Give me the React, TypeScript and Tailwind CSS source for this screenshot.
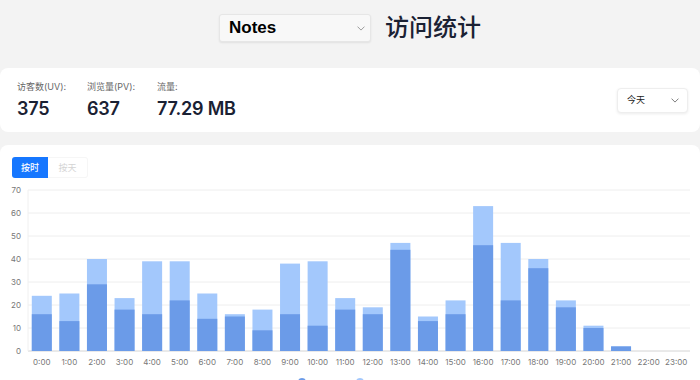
import React from "react";

const UV = [16, 13, 29, 18, 16, 22, 14, 15, 9, 16, 11, 18, 16, 44, 13, 16, 46, 22, 36, 19, 10, 2, 0, 0];
const PV = [24, 25, 40, 23, 39, 39, 25, 16, 18, 38, 39, 23, 19, 47, 15, 22, 63, 47, 40, 22, 11, 2, 0, 0];

const FONT = { fontFamily: '"Inter", "Noto Sans CJK SC", sans-serif' };

function Chevron({ className }: { className?: string }) {
  return (
    <svg className={className} viewBox="0 0 10 6" width="8" height="5" fill="none">
      <path d="M1 1l4 4 4-4" stroke="currentColor" strokeWidth="1.2" strokeLinecap="round" strokeLinejoin="round" />
    </svg>
  );
}

function Stat({ label, value }: { label: string; value: string }) {
  return (
    <div className="w-[70px] whitespace-nowrap">
      <div className="text-[9px] leading-[12px] text-[#666]">{label}</div>
      <div className="mt-[5px] text-[18px] font-semibold leading-[22px] tracking-[-0.2px] text-[#1a2133]">{value}</div>
    </div>
  );
}

function Chart() {
  const left = 28;
  const right = 690;
  const top = 7;
  const bottom = 168;
  const slot = (right - left) / 24;
  const y = (v: number) => bottom - (v / 70) * (bottom - top);
  return (
    <svg width="700" height="200" className="block">
      {[0, 10, 20, 30, 40, 50, 60, 70].map((t) => (
        <g key={t}>
          <line x1={left} x2={right} y1={y(t)} y2={y(t)} stroke={t === 0 ? "#d4d4d4" : "#eeeeee"} strokeWidth="1" />
          <text x={21} y={y(t) + 3} fontSize="8" fill="#777" textAnchor="end">
            {t}
          </text>
        </g>
      ))}
      <line x1={left} x2={left} y1={top} y2={bottom} stroke="#f0f0f0" />
      {PV.map((pv, i) => {
        const cx = left + slot * (i + 0.5);
        return (
          <g key={i}>
            {pv > 0 && <rect x={cx - 10} y={y(pv)} width={20} height={bottom - y(pv)} fill="#a3c8fc" />}
            {UV[i] > 0 && <rect x={cx - 10} y={y(UV[i])} width={20} height={bottom - y(UV[i])} fill="#6b9be8" />}
            <text x={cx} y={182} fontSize="8" fill="#777" textAnchor="middle">
              {i}:00
            </text>
          </g>
        );
      })}
      <circle cx={302} cy={199} r={4} fill="#6b9be8" />
      <circle cx={360} cy={199} r={4} fill="#a3c8fc" />
    </svg>
  );
}

export default function App() {
  return (
    <div className="h-[380px] w-[700px] overflow-hidden bg-[#f3f3f3]" style={FONT}>
      <div className="flex h-[68px] items-start justify-center gap-[14px] pt-[14px]">
        <div className="flex h-[28px] w-[152px] items-center justify-between rounded-[3px] border border-[#e6e6e6] bg-[#f8f8f8] pl-[9px] pr-[5px] shadow-[0_1px_2px_rgba(0,0,0,0.08)]">
          <span className="text-[17px] font-bold text-black" style={{ fontFamily: '"Liberation Sans", sans-serif' }}>
            Notes
          </span>
          <Chevron className="text-[#999]" />
        </div>
        <div className="text-[24px] font-medium leading-[28px] text-[#1a2133]">访问统计</div>
      </div>

      <div className="flex h-[64px] items-center justify-between rounded-[8px] bg-white pl-[17px] pr-[12px]">
        <div className="flex">
          <Stat label="访客数(UV):" value="375" />
          <Stat label="浏览量(PV):" value="637" />
          <Stat label="流量:" value="77.29 MB" />
        </div>
        <div className="flex h-[25px] w-[71px] items-center justify-between rounded-[4px] border border-[#eee] bg-white pl-[9px] pr-[8px] shadow-[0_1px_3px_rgba(0,0,0,0.08)]">
          <span className="text-[9px] text-[#222]">今天</span>
          <Chevron className="text-[#777]" />
        </div>
      </div>

      <div className="mt-[13px] h-[260px] rounded-[8px] bg-white pt-[12px]">
        <div className="flex pl-[12px]">
          <div className="flex h-[21px] w-[36px] items-center justify-center rounded-l-[3px] bg-[#1677ff] text-[9px] font-medium text-white">
            按时
          </div>
          <div className="flex h-[21px] w-[40px] items-center justify-center rounded-r-[3px] border border-l-0 border-[#f6f6f6] text-[9px] text-[#d4d4d4]">
            按天
          </div>
        </div>
        <div className="mt-[5px]">
          <Chart />
        </div>
      </div>
    </div>
  );
}
